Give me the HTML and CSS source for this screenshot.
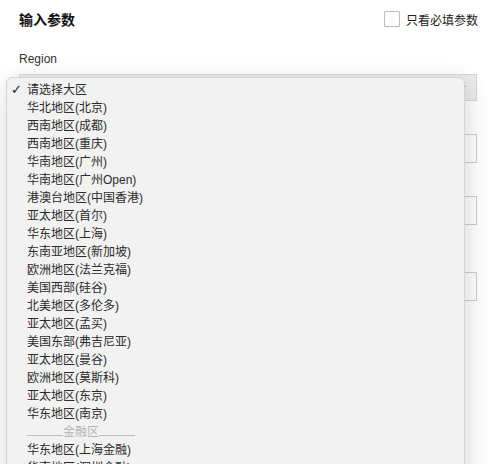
FILE: index.html
```html
<!DOCTYPE html>
<html lang="zh-CN">
<head>
  <meta charset="UTF-8">
  <title>输入参数</title>
  <link rel="stylesheet" href="styles.css">
</head>
<body>
  <div class="panel">
    <div class="header">
      <div class="title">输入参数</div>
      <label class="only-required">
        <span class="checkbox"></span>
        <span>只看必填参数</span>
      </label>
    </div>

    <div class="field">
      <div class="label">Region</div>
      <div class="select-wrap">
        <div class="select"><span class="arrow"></span></div>
        <ul class="menu">
          <li class="checked">请选择大区</li>
          <li>华北地区(北京)</li>
          <li>西南地区(成都)</li>
          <li>西南地区(重庆)</li>
          <li>华南地区(广州)</li>
          <li>华南地区(广州Open)</li>
          <li>港澳台地区(中国香港)</li>
          <li>亚太地区(首尔)</li>
          <li>华东地区(上海)</li>
          <li>东南亚地区(新加坡)</li>
          <li>欧洲地区(法兰克福)</li>
          <li>美国西部(硅谷)</li>
          <li>北美地区(多伦多)</li>
          <li>亚太地区(孟买)</li>
          <li>美国东部(弗吉尼亚)</li>
          <li>亚太地区(曼谷)</li>
          <li>欧洲地区(莫斯科)</li>
          <li>亚太地区(东京)</li>
          <li>华东地区(南京)</li>
          <li class="group"><span class="rule"></span>金融区<span class="rule"></span></li>
          <li>华东地区(上海金融)</li>
          <li>华南地区(深圳金融)</li>
        </ul>
      </div>
    </div>

    <!-- these fields sit under the open menu, only their right edges show -->
    <div class="field">
      <div class="label-space"></div>
      <div class="input"></div>
    </div>

    <div class="field">
      <div class="label-space"></div>
      <div class="input"></div>
    </div>

    <div class="field wide">
      <div class="label-space"></div>
      <div class="input"></div>
    </div>
  </div>
</body>
</html>
```

FILE: styles.css
```css
html, body {
  height: 464px;
  overflow: hidden;
}

body {
  margin: 0;
  background: #fff;
  font-family: "Liberation Sans", "Noto Sans CJK SC", sans-serif;
  color: #333;
}

.panel {
  height: 464px;
  box-sizing: border-box;
  padding: 9px 17px 0 19px;
}

.header {
  display: flex;
  justify-content: space-between;
  align-items: center;
  height: 20px;
  margin-bottom: 22px;
}

.title {
  font-size: 14px;
  font-weight: bold;
  color: #111;
}

.only-required {
  display: flex;
  align-items: center;
  gap: 6px;
  font-size: 12px;
  color: #222;
  margin-right: -1px;
}

.checkbox {
  width: 14px;
  height: 14px;
  border: 1px solid #bbb;
  border-radius: 1px;
  background: #fff;
}

.field {
  margin-bottom: 10px;
}

.field.wide {
  margin-top: 24px;
}

.label {
  font-size: 12px;
  line-height: 16px;
  margin-bottom: 7px;
  color: #333;
}

.label-space {
  height: 16px;
  margin-bottom: 7px;
}

.select-wrap {
  position: relative;
}

.select {
  height: 25px;
  border: 1px solid #d6d6d6;
  background: #ececec;
  position: relative;
}

.arrow {
  position: absolute;
  right: 10px;
  top: 11px;
  border-left: 3px solid transparent;
  border-right: 3px solid transparent;
  border-top: 4px solid #666;
}

.input {
  height: 27px;
  border: 1px solid #ccc;
  background: #fff;
}

.menu {
  position: absolute;
  left: -13px;
  top: 3px;
  width: 457px;
  height: 420px;
  margin: 0;
  padding: 3px 0 0;
  list-style: none;
  background: #f2f2f2;
  border: 1px solid #d4d4d4;
  border-radius: 6px;
  box-shadow: 2px 6px 24px rgba(0, 0, 0, 0.16);
  z-index: 10;
}

.menu li {
  font-size: 12px;
  line-height: 18px;
  padding-left: 20px;
  color: #2b2b2b;
  position: relative;
  white-space: nowrap;
}

.menu li.checked::before {
  content: "✓";
  position: absolute;
  left: 4px;
  top: 0;
  font-family: "DejaVu Sans", sans-serif;
  font-size: 13px;
  font-weight: bold;
  color: #1a1a1a;
}

.menu li.group {
  display: flex;
  align-items: baseline;
  color: #b5b5b5;
}

.rule {
  display: inline-block;
  width: 36px;
  border-bottom: 1px solid #bdbdbd;
  margin-bottom: -2px;
}
```
